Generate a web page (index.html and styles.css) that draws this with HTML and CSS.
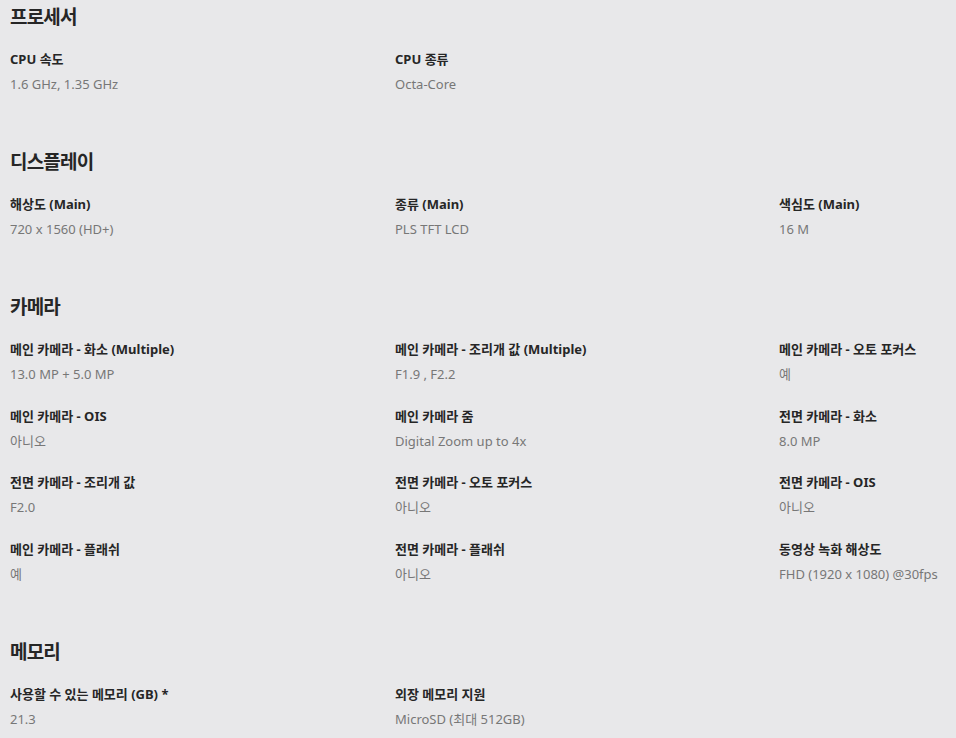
FILE: index.html
```html
<!DOCTYPE html>
<html lang="ko">
<head>
<meta charset="utf-8">
<title>사양</title>
<link rel="stylesheet" href="styles.css">
</head>
<body>
<div class="specs">
  <section class="spec-section">
    <h2 class="spec-title">프로세서</h2>
    <div class="spec-grid">
      <div class="spec-item"><div class="spec-label">CPU 속도</div><div class="spec-value">1.6 GHz, 1.35 GHz</div></div>
      <div class="spec-item"><div class="spec-label">CPU 종류</div><div class="spec-value">Octa-Core</div></div>
    </div>
  </section>
  <section class="spec-section">
    <h2 class="spec-title">디스플레이</h2>
    <div class="spec-grid">
      <div class="spec-item"><div class="spec-label">해상도 (Main)</div><div class="spec-value">720 x 1560 (HD+)</div></div>
      <div class="spec-item"><div class="spec-label">종류 (Main)</div><div class="spec-value">PLS TFT LCD</div></div>
      <div class="spec-item"><div class="spec-label">색심도 (Main)</div><div class="spec-value">16 M</div></div>
    </div>
  </section>
  <section class="spec-section">
    <h2 class="spec-title">카메라</h2>
    <div class="spec-grid">
      <div class="spec-item"><div class="spec-label">메인 카메라 - 화소 (Multiple)</div><div class="spec-value">13.0 MP + 5.0 MP</div></div>
      <div class="spec-item"><div class="spec-label">메인 카메라 - 조리개 값 (Multiple)</div><div class="spec-value">F1.9 , F2.2</div></div>
      <div class="spec-item"><div class="spec-label">메인 카메라 - 오토 포커스</div><div class="spec-value">예</div></div>
      <div class="spec-item"><div class="spec-label">메인 카메라 - OIS</div><div class="spec-value">아니오</div></div>
      <div class="spec-item"><div class="spec-label">메인 카메라 줌</div><div class="spec-value">Digital Zoom up to 4x</div></div>
      <div class="spec-item"><div class="spec-label">전면 카메라 - 화소</div><div class="spec-value">8.0 MP</div></div>
      <div class="spec-item"><div class="spec-label">전면 카메라 - 조리개 값</div><div class="spec-value">F2.0</div></div>
      <div class="spec-item"><div class="spec-label">전면 카메라 - 오토 포커스</div><div class="spec-value">아니오</div></div>
      <div class="spec-item"><div class="spec-label">전면 카메라 - OIS</div><div class="spec-value">아니오</div></div>
      <div class="spec-item"><div class="spec-label">메인 카메라 - 플래쉬</div><div class="spec-value">예</div></div>
      <div class="spec-item"><div class="spec-label">전면 카메라 - 플래쉬</div><div class="spec-value">아니오</div></div>
      <div class="spec-item"><div class="spec-label">동영상 녹화 해상도</div><div class="spec-value">FHD (1920 x 1080) @30fps</div></div>
    </div>
  </section>
  <section class="spec-section">
    <h2 class="spec-title">메모리</h2>
    <div class="spec-grid">
      <div class="spec-item"><div class="spec-label">사용할 수 있는 메모리 (GB) *</div><div class="spec-value">21.3</div></div>
      <div class="spec-item"><div class="spec-label">외장 메모리 지원</div><div class="spec-value">MicroSD (최대 512GB)</div></div>
    </div>
  </section>
</div>
</body>
</html>
```

FILE: styles.css
```css
html, body {
  margin: 0;
  padding: 0;
  background: #e8e8ea;
}
body {
  font-family: "Noto Sans", "Noto Sans CJK KR", sans-serif;
  color: #1f1f1f;
}
.specs {
  padding: 2px 0 0 10px;
}
.spec-section {
  margin-bottom: 53px;
}
.spec-title {
  margin: 0;
  font-size: 19px;
  line-height: 28px;
  font-weight: 700;
  letter-spacing: -0.8px;
  color: #262626;
  font-family: "Noto Sans CJK KR", sans-serif;
}
.spec-grid {
  margin-top: 19px;
  display: grid;
  grid-template-columns: 385px 384px 1fr;
  row-gap: 21.7px;
}
.spec-label {
  font-size: 13px;
  line-height: 20px;
  font-weight: 700;
  color: #262626;
}
.spec-value {
  margin-top: 5px;
  font-size: 13px;
  line-height: 20px;
  color: #777777;
}
```
